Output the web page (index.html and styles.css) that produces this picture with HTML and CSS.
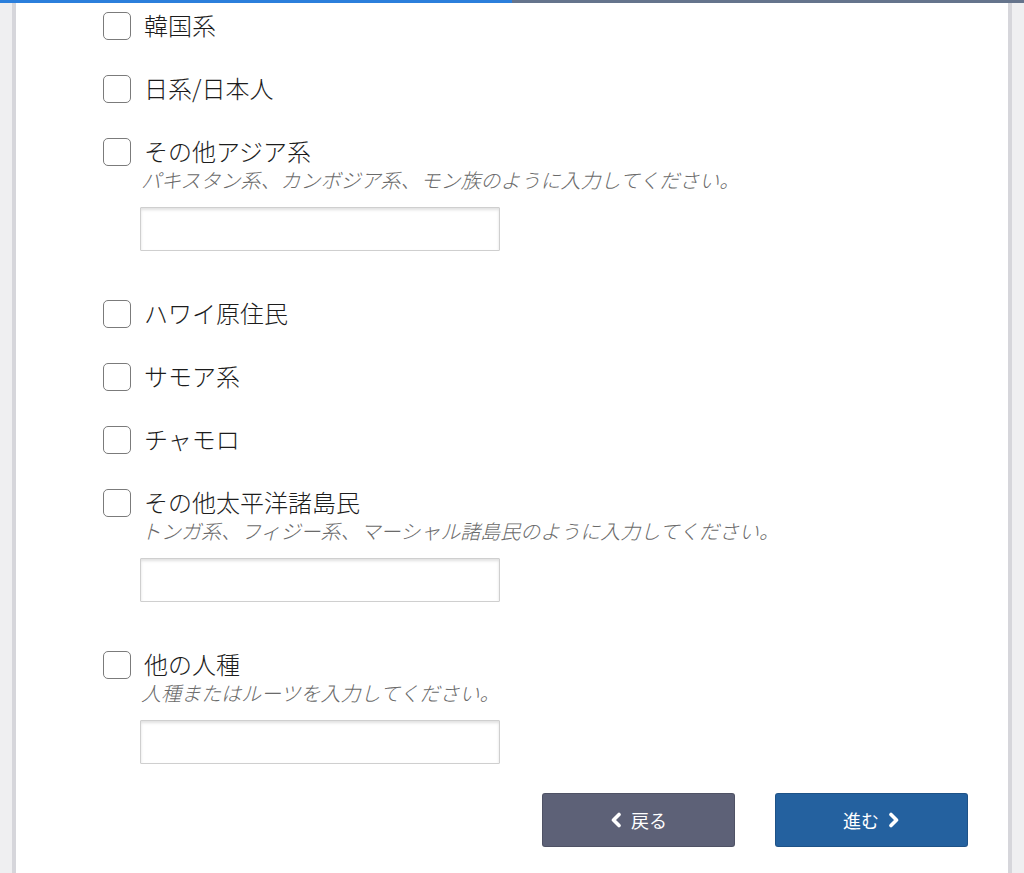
FILE: index.html
```html
<!DOCTYPE html>
<html lang="ja">
<head>
    <meta charset="UTF-8">
    <meta name="viewport" content="width=device-width, initial-scale=1.0">
    <title>人種</title>
    <link rel="stylesheet" href="styles.css">
</head>
<body>
    <div class="progress"><div class="progress-fill"></div></div>
    <div class="page">
        <div class="panel">
            <div class="option">
                <div class="option-row"><span class="box"></span><span class="label">韓国系</span></div>
            </div>
            <div class="option">
                <div class="option-row"><span class="box"></span><span class="label">日系/日本人</span></div>
            </div>
            <div class="option has-detail">
                <div class="option-row"><span class="box"></span><span class="label">その他アジア系</span></div>
                <div class="detail">
                    <div class="hint">パキスタン系、カンボジア系、モン族のように入力してください。</div>
                    <input class="text-input" type="text">
                </div>
            </div>
            <div class="option">
                <div class="option-row"><span class="box"></span><span class="label">ハワイ原住民</span></div>
            </div>
            <div class="option">
                <div class="option-row"><span class="box"></span><span class="label">サモア系</span></div>
            </div>
            <div class="option">
                <div class="option-row"><span class="box"></span><span class="label">チャモロ</span></div>
            </div>
            <div class="option has-detail">
                <div class="option-row"><span class="box"></span><span class="label">その他太平洋諸島民</span></div>
                <div class="detail">
                    <div class="hint">トンガ系、フィジー系、マーシャル諸島民のように入力してください。</div>
                    <input class="text-input" type="text">
                </div>
            </div>
            <div class="option has-detail last">
                <div class="option-row"><span class="box"></span><span class="label">他の人種</span></div>
                <div class="detail">
                    <div class="hint">人種またはルーツを入力してください。</div>
                    <input class="text-input" type="text">
                </div>
            </div>

            <div class="nav">
                <button class="btn btn-back">
                    <svg width="12" height="16" viewBox="0 0 12 16"><polyline points="9,2.5 3.5,8 9,13.5" fill="none" stroke="#fff" stroke-width="3.6" stroke-linecap="round" stroke-linejoin="round"/></svg>
                    <span>戻る</span>
                </button>
                <button class="btn btn-next">
                    <span>進む</span>
                    <svg width="12" height="16" viewBox="0 0 12 16"><polyline points="3,2.5 8.5,8 3,13.5" fill="none" stroke="#fff" stroke-width="3.6" stroke-linecap="round" stroke-linejoin="round"/></svg>
                </button>
            </div>
        </div>
    </div>
</body>
</html>
```

FILE: styles.css
```css
html, body {
    margin: 0;
    padding: 0;
}
body {
    background: #efeff1;
    font-family: "Noto Sans CJK JP", "Noto Sans", sans-serif;
    color: #222;
    height: 873px;
    overflow: hidden;
}
.progress {
    height: 3px;
    background: #65748c;
}
.progress-fill {
    width: 50%;
    height: 100%;
    background: #2b7fdc;
}
.page {
    padding: 0 12px;
}
.panel {
    background: #fff;
    border-left: 4px solid #d6d6db;
    border-right: 4px solid #d6d6db;
    padding: 9px 40px 30px 87px;
    min-height: 840px;
}
.option {
    margin-bottom: 35px;
}
.option.has-detail {
    margin-bottom: 49px;
}
.option.last {
    margin-bottom: 29px;
}
.option-row {
    display: flex;
    align-items: center;
    gap: 13px;
}
.box {
    width: 26px;
    height: 26px;
    border: 1.4px solid #7b7b7b;
    border-radius: 5px;
    flex-shrink: 0;
}
.label {
    font-size: 24px;
    font-weight: 300;
    line-height: 28px;
    color: #1c1c1c;
    margin-top: -3px;
}
.detail {
    padding-left: 37px;
}
.hint {
    font-size: 20px;
    font-weight: 300;
    font-style: italic;
    line-height: 28px;
    color: #6a6a6a;
    margin-left: 1px;
}
.text-input {
    display: block;
    box-sizing: border-box;
    width: 360px;
    height: 44px;
    margin-top: 13px;
    border: 1px solid #cfcfcf;
    border-radius: 1px;
    box-shadow: inset 0 2px 3px rgba(0,0,0,0.12);
    background: #fff;
    font-size: 18px;
}
.nav {
    display: flex;
    justify-content: flex-end;
    gap: 40px;
}
.btn {
    width: 193px;
    height: 54px;
    border: 1px solid rgba(0,0,0,0.15);
    border-radius: 3px;
    color: #fff;
    font-family: "Noto Sans CJK JP", sans-serif;
    font-size: 18px;
    display: flex;
    align-items: center;
    justify-content: center;
    gap: 9px;
    padding: 0;
}
.btn-back {
    background: #5d6177;
}
.btn-next {
    background: #24619f;
}
```
